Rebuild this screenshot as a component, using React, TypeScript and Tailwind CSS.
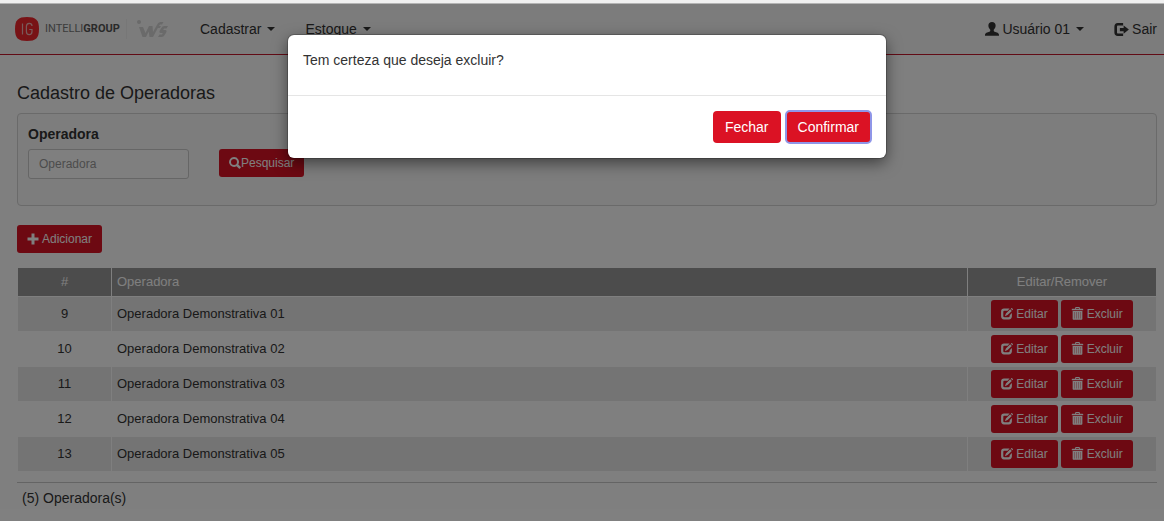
import type { ReactNode } from 'react';

type Operadora = { id: number; nome: string };

const operadoras: Operadora[] = [
  { id: 9, nome: 'Operadora Demonstrativa 01' },
  { id: 10, nome: 'Operadora Demonstrativa 02' },
  { id: 11, nome: 'Operadora Demonstrativa 03' },
  { id: 12, nome: 'Operadora Demonstrativa 04' },
  { id: 13, nome: 'Operadora Demonstrativa 05' },
];

// Icons share a 1200 x 1200 grid
function Icon({ className = 'size-3', children }: { className?: string; children: ReactNode }) {
  return (
    <svg viewBox="0 0 1200 1200" fill="currentColor" className={`shrink-0 ${className}`} aria-hidden="true">
      {children}
    </svg>
  );
}

const UserIcon = () => (
  <Icon className="size-[14px]">
    <path d="M600 0c-190 0-310 120-310 300 0 80 14 140 40 200 24 70 80 130 120 170v75c0 40-30 62-70 80L120 925C50 960 0 1030 0 1110v70h1200v-70c0-80-50-150-120-185L820 825c-40-18-70-40-70-80v-75c40-40 96-100 120-170 26-60 40-120 40-200C910 120 790 0 600 0z" />
  </Icon>
);

const LogoutIcon = () => (
  <Icon className="size-[15px]">
    <path d="M300 80h430v200H330c-60 0-90 40-90 90v460c0 50 30 90 90 90h400v200H300C130 1120 30 1000 30 830V370C30 200 130 80 300 80z" />
    <path d="M770 270l420 330-420 330V730H470V470h300z" />
  </Icon>
);

const SearchIcon = () => (
  <Icon>
    <path
      fillRule="evenodd"
      d="M500 10a490 490 0 1 0 250 910l240 240c30 30 70 30 100 0l80-80c30-30 30-70 0-100L930 745A490 490 0 0 0 500 10zm0 190a300 300 0 1 1 0 600 300 300 0 0 1 0-600z"
    />
  </Icon>
);

const PlusIcon = () => (
  <Icon>
    <path d="M450 50h300v400h400v300H750v400H450V750H50V450h400z" />
  </Icon>
);

const EditIcon = () => (
  <Icon>
    <path d="M300 60h560L660 280H350c-80 0-120 40-120 120v400c0 80 40 120 120 120h400c80 0 120-40 120-120V720l220-210v310c0 200-110 320-310 320H300C110 1140 10 1020 10 820V380C10 180 110 60 300 60z" />
    <path d="M920 130l160 160-420 420-270 110 100-280zM980 70l70-60c20-15 40-15 60 5l80 80c20 20 20 40 5 60l-60 70z" />
  </Icon>
);

const TrashIcon = () => (
  <Icon className="mb-[2px] size-[13px]">
    <path
      fillRule="evenodd"
      d="M460 10h280c50 0 80 30 80 80v70h240c40 0 70 30 70 80v50H70v-50c0-50 30-80 70-80h240V90c0-50 30-80 80-80zm10 80v70h260V90z"
    />
    <path
      fillRule="evenodd"
      d="M150 360h900v720c0 60-40 100-100 100H250c-60 0-100-40-100-100zm170 110v600h30V470zm180 0v600h30V470zm180 0v600h30V470zm180 0v600h30V470z"
    />
  </Icon>
);

const Caret = () => (
  <svg viewBox="0 0 8 4" className="h-1 w-2" fill="currentColor" aria-hidden="true">
    <path d="M0 0h8L4 4z" />
  </svg>
);

function SmallButton({ children, className = '' }: { children: ReactNode; className?: string }) {
  return (
    <button
      type="button"
      className={`inline-flex h-7 items-center rounded-[3px] bg-[#db1224] px-[10px] text-[12px] leading-[18px] text-white ${className}`}
    >
      {children}
    </button>
  );
}

function Logo() {
  return (
    <a href="#" className="flex w-[156px] items-center">
      <svg viewBox="0 0 24 24" className="size-6 shrink-0" aria-hidden="true">
        <path
          d="M12 0c9 0 12 3 12 12s-3 12-12 12S0 21 0 12 3 0 12 0z"
          fill="#f0262c"
        />
        <g fill="none" stroke="#f3b5b5" strokeWidth="1.2">
          <path d="M7.500 6.500v11" />
          <path d="M17 9c0-1.700-1-2.700-2.800-2.700S11.400 7.500 11.400 9.500v5c0 2 1 3.200 2.800 3.200S17 16.500 17 14.500V12.500h-2.800" />
        </g>
      </svg>
      <span className="ml-[6px] font-['Roboto',sans-serif] text-[11px] text-[#777]">
        INTELLI<b className="text-[#555]">GROUP</b>
      </span>
      <span className="ml-[6px] h-5 w-px bg-[#eee]" />
      <svg viewBox="0 0 31 18" className="ml-[10px] h-[18px] w-[31px] shrink-0" fill="#d4d4d4" aria-hidden="true">
        <circle cx="2" cy="2" r="2" />
        <path d="M2 7h4l2.500 6L12 6h3.500l.5 6 4.500-8c1-1.500 2-2 4-2h2l-1.500 2.500h-2L22 6h2l-1.200 2h-2L16 17h-3.500l-.8-5.500L9 17H5.500z" />
        <path d="M21 17l1.500-2.500h2.500l.8-1.500h-2c-1.500 0-1.800-1-1-2.500l1.200-2c1-1.700 2-2.500 3.500-2.500H31l-1.500 2.500H27L26.200 10h2c1.500 0 1.800 1 1 2.500l-1.200 2c-1 1.700-2 2.500-3.500 2.500z" />
      </svg>
    </a>
  );
}

function Navbar() {
  return (
    <nav className="flex h-[51px] items-center border-b border-[#c4162a] bg-[#f8f8f8] pr-[7px] pl-[15px]">
      <Logo />
      <div className="ml-[29px] flex gap-[30px]">
        <button type="button" className="flex items-center gap-[6px]">
          Cadastrar <Caret />
        </button>
        <button type="button" className="flex items-center gap-[6px]">
          Estoque <Caret />
        </button>
      </div>
      <div className="ml-auto flex gap-[30px]">
        <button type="button" className="flex items-center gap-[6px]">
          <span className="flex items-center gap-[3px]">
            <UserIcon /> Usuário 01
          </span>
          <Caret />
        </button>
        <a href="#" className="flex items-center gap-[3px]">
          <LogoutIcon /> Sair
        </a>
      </div>
    </nav>
  );
}

function ConfirmModal() {
  return (
    <div className="absolute inset-0 flex items-start justify-center bg-black/50 pt-[31px] pl-[10px]">
      <div
        role="dialog"
        aria-modal="true"
        aria-labelledby="modal-text"
        className="w-full max-w-[598px] rounded-md bg-white shadow-[0_5px_15px_rgba(0,0,0,0.5)] ring-1 ring-black/20"
      >
        <p id="modal-text" className="h-[60px] px-[15px] pt-[15px]">
          Tem certeza que deseja excluir?
        </p>
        <div className="flex justify-end gap-[5px] border-t border-[#e5e5e5] p-[15px]">
          <button type="button" className="h-8 rounded bg-[#db1224] px-3 text-white">
            Fechar
          </button>
          <button
            type="button"
            className="h-8 rounded bg-[#db1224] px-3 text-white outline-2 -outline-offset-1 outline-[#8f96e8]"
          >
            Confirmar
          </button>
        </div>
      </div>
    </div>
  );
}

export default function App() {
  return (
    <div className="font-['Liberation_Sans',Arial,sans-serif] text-[14px] leading-5 text-[#333]">
      <div className="h-1 border-b border-[#b4b4b4] bg-[#f0f0f0]" />
      <div className="relative min-h-[calc(100vh-4px)] bg-white">
        <Navbar />

        <main className="pt-7 pr-[7px] pb-3 pl-[17px]">
          <h1 className="text-[18px] leading-5">Cadastro de Operadoras</h1>

          <form className="mt-[10px] flex h-[93px] items-start gap-[30px] rounded border border-[#d5d5d5] bg-[#fafafa] px-[10px] pt-[10px]">
            <div className="w-[161px]">
              <label htmlFor="operadora" className="mb-[5px] block font-bold">
                Operadora
              </label>
              <input
                id="operadora"
                type="text"
                placeholder="Operadora"
                className="h-[30px] w-full rounded-[3px] border border-[#ccc] bg-white px-[10px] text-[12px] placeholder:text-[#999]"
              />
            </div>
            <SmallButton className="mt-[25px]">
              <SearchIcon />
              Pesquisar
            </SmallButton>
          </form>

          <SmallButton className="mt-[19px] gap-[3px]">
            <PlusIcon />
            Adicionar
          </SmallButton>

          <table className="mt-[14px] w-full table-fixed border-collapse text-[13px] leading-[18px]">
            <colgroup>
              <col className="w-[94px]" />
              <col />
              <col className="w-[189px]" />
            </colgroup>
            <thead>
              <tr className="h-[29px] bg-[#999] text-white">
                <th className="border border-white font-normal">#</th>
                <th className="border border-white px-[5px] text-left font-normal">Operadora</th>
                <th className="border border-white font-normal">Editar/Remover</th>
              </tr>
            </thead>
            <tbody>
              {operadoras.map(({ id, nome }) => (
                <tr key={id} className="h-[35px] odd:bg-[#e8e8e8]">
                  <td className="border border-white text-center">{id}</td>
                  <td className="border border-white px-[5px]">{nome}</td>
                  <td className="border border-white">
                    <div className="flex justify-center gap-[3px]">
                      <SmallButton className="gap-[3px]">
                        <EditIcon />
                        Editar
                      </SmallButton>
                      <SmallButton className="gap-[3px]">
                        <TrashIcon />
                        Excluir
                      </SmallButton>
                    </div>
                  </td>
                </tr>
              ))}
            </tbody>
          </table>

          <p className="mt-[10px] border-t border-[#c8c8c8] px-[5px] pt-[5px]">
            ({operadoras.length}) Operadora(s)
          </p>
        </main>

        <ConfirmModal />
      </div>
    </div>
  );
}
